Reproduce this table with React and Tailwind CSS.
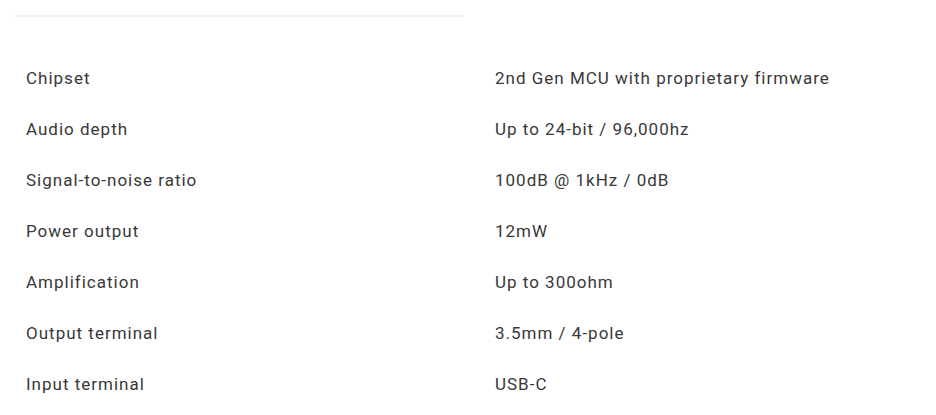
const specs = [
  ["Chipset", "2nd Gen MCU with proprietary firmware"],
  ["Audio depth", "Up to 24-bit / 96,000hz"],
  ["Signal-to-noise ratio", "100dB @ 1kHz / 0dB"],
  ["Power output", "12mW"],
  ["Amplification", "Up to 300ohm"],
  ["Output terminal", "3.5mm / 4-pole"],
  ["Input terminal", "USB-C"],
]

export default function App() {
  return (
    <div className="w-[936px] h-[415px] bg-white overflow-hidden font-['Roboto',sans-serif] text-[#383838]">
      <div className="pt-[15px] pl-[15px]">
        <div className="w-[449px] h-[2px] bg-[#eeeeee]" />
      </div>
      <div className="mt-[36px] flex flex-col">
        {specs.map(([label, value]) => (
          <div key={label} className="flex h-[51px] items-center pl-[26px] text-[17px] tracking-[1px]">
            <span className="w-[469px] shrink-0">{label}</span>
            <span>{value}</span>
          </div>
        ))}
      </div>
    </div>
  )
}
